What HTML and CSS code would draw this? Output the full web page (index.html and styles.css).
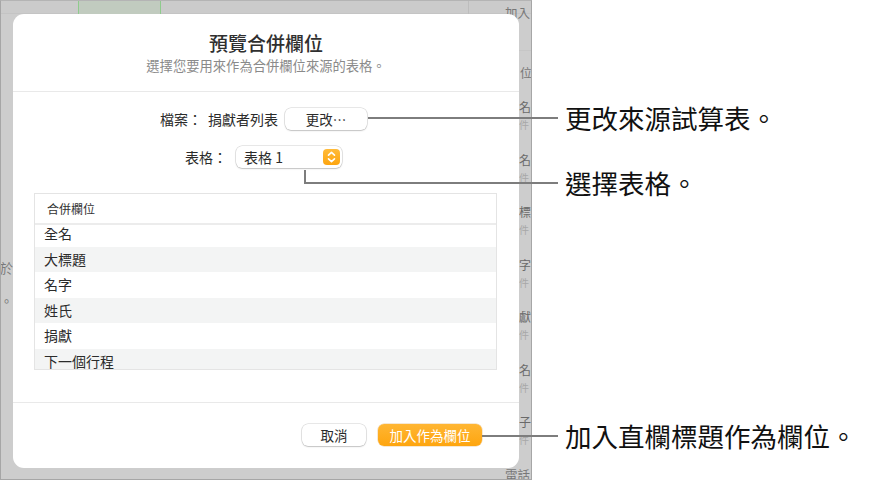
FILE: index.html
```html
<!DOCTYPE html>
<html lang="zh-Hant">
<head>
<meta charset="utf-8">
<link rel="stylesheet" href="styles.css">
</head>
<body>
<div class="page">
  <div class="screen">
    <div class="topband">
      <div class="selcell"></div>
      <div class="topdiv"></div>
    </div>
    <div class="leftcol">
      <span class="lc-a">於</span>
      <span class="lc-b">。</span>
    </div>
    <div class="rightcol">
      <div class="rc-top">加入</div>
      <div class="rc-head">位</div>
      <div class="rc-pair"><span class="big">名</span><span class="small">件</span></div>
      <div class="rc-pair"><span class="big">名</span><span class="small">件</span></div>
      <div class="rc-pair"><span class="big">標</span><span class="small">件</span></div>
      <div class="rc-pair"><span class="big">字</span><span class="small">件</span></div>
      <div class="rc-pair"><span class="big">獻</span><span class="small">件</span></div>
      <div class="rc-pair"><span class="big">名</span><span class="small">件</span></div>
      <div class="rc-pair"><span class="big">子</span><span class="small">件</span></div>
      <div class="rc-bottom">雷話</div>
    </div>

    <div class="dialog">
      <div class="dlg-head">
        <div class="dlg-title">預覽合併欄位</div>
        <div class="dlg-sub">選擇您要用來作為合併欄位來源的表格。</div>
      </div>
      <div class="dlg-body">
        <div class="form-row">
          <span class="lbl">檔案：</span>
          <span class="val">捐獻者列表</span>
          <button class="btn btn-change">更改⋯</button>
        </div>
        <div class="form-row row2">
          <span class="lbl">表格：</span>
          <div class="popup">
            <span>表格 1</span>
            <span class="stepper">
              <svg width="17" height="16" viewBox="0 0 17 16">
                <path d="M5.5 6.2 L8.5 3.4 L11.5 6.2" fill="none" stroke="#fff" stroke-width="1.6" stroke-linecap="round" stroke-linejoin="round"/>
                <path d="M5.5 9.8 L8.5 12.6 L11.5 9.8" fill="none" stroke="#fff" stroke-width="1.6" stroke-linecap="round" stroke-linejoin="round"/>
              </svg>
            </span>
          </div>
        </div>
        <div class="table">
          <div class="th">合併欄位</div>
          <div class="rows">
            <div class="tr first">全名</div>
            <div class="tr alt">大標題</div>
            <div class="tr">名字</div>
            <div class="tr alt">姓氏</div>
            <div class="tr">捐獻</div>
            <div class="tr alt">下一個行程</div>
          </div>
        </div>
      </div>
      <div class="dlg-foot">
        <button class="btn btn-cancel">取消</button>
        <button class="btn btn-primary">加入作為欄位</button>
      </div>
    </div>
  </div>

  <div class="callout c1"><span class="cline"></span><span class="ctext">更改來源試算表。</span></div>
  <div class="callout c2"><span class="cline elbow"></span><span class="ctext">選擇表格。</span></div>
  <div class="callout c3"><span class="cline"></span><span class="ctext">加入直欄標題作為欄位。</span></div>
</div>
</body>
</html>
```

FILE: styles.css
```css
* { box-sizing: border-box; }
html, body { margin: 0; padding: 0; background: #fff; }
body {
  font-family: "Noto Sans CJK TC", "Noto Sans", "Liberation Sans", sans-serif;
  width: 875px;
  height: 481px;
  overflow: hidden;
}
.page {
  position: relative;
  width: 875px;
  height: 481px;
}
.screen {
  position: relative;
  width: 532px;
  height: 480px;
  background: #cdcdcd;
  border-left: 1px solid #a6a6a6;
  border-right: 1px solid #a6a6a6;
  border-bottom: 1px solid #a6a6a6;
  border-top: 1px solid #b4b4b4;
  overflow: hidden;
}
.topband {
  height: 13px;
  display: flex;
  border-bottom: 1px solid #c4c4c4;
  background: #cbcbcb;
}
.selcell {
  margin-left: 77px;
  width: 83px;
  height: 13px;
  background: #c1cbbf;
  border-left: 1px solid #8fcb8d;
  border-right: 1px solid #8fcb8d;
}
.topdiv {
  margin-left: 307px;
  width: 1px;
  height: 13px;
  background: #bdbdbd;
}
.leftcol {
  position: absolute;
  left: -1px;
  top: 256px;
  width: 13px;
  display: flex;
  flex-direction: column;
  align-items: flex-end;
  color: #7a7a7a;
  font-size: 13px;
  line-height: 22px;
}
.leftcol span { white-space: nowrap; }
.lc-b { margin-top: 11px; }
.rightcol {
  position: absolute;
  left: 503px;
  top: -1px;
  width: 27px;
  display: flex;
  flex-direction: column;
  color: #6f6f6f;
  font-size: 12px;
}
.rightcol div { white-space: nowrap; }
.rc-top { height: 26px; line-height: 26px; font-size: 12.5px; color: #777; padding-left: 1px; }
.rc-head { margin-top: 24px; padding-top: 12px; height: 32px; line-height: 20px; font-size: 12px; color: #777; padding-left: 16px; border-top: 1px solid #c6c6c6; }
.rc-pair {
  height: 52.5px;
  display: flex;
  flex-direction: column;
  padding-left: 15px;
}
.rc-head + .rc-pair { margin-top: 15px; }
.rc-pair .big { height: 20px; line-height: 20px; font-size: 12px; color: #6a6a6a; }
.rc-pair .small { height: 16px; line-height: 16px; font-size: 10px; color: #a8a8a8; }
.rc-bottom { margin-top: 2px; height: 16px; line-height: 16px; font-size: 12.5px; color: #777; padding-left: 1px; }

/* dialog sheet over the app */
.dialog {
  position: absolute;
  left: 12px;
  top: 13px;
  width: 506px;
  height: 454px;
  background: #fff;
  border-radius: 11px;
  display: flex;
  flex-direction: column;
  color: #2b2b2b;
}
.dlg-head {
  padding-top: 17px;
  height: 78px;
  border-bottom: 1px solid #e9e9e9;
  text-align: center;
}
.dlg-title {
  font-size: 19px;
  line-height: 24px;
  font-weight: 500;
  color: #2f2f2f;
}
.dlg-sub {
  margin-top: 3px;
  font-size: 13.3px;
  line-height: 16px;
  color: #8a8a8a;
}
.dlg-body {
  flex: 1;
  padding-top: 16px;
  display: flex;
  flex-direction: column;
  border-bottom: 1px solid #e9e9e9;
}
.form-row {
  display: flex;
  align-items: center;
  justify-content: center;
  height: 22px;
  padding-right: 5px;
  font-size: 14px;
  color: #2b2b2b;
}
.form-row .lbl { margin-right: 6px; }
.form-row .val { margin-right: 7px; }
.row2 { margin-top: 16px; }
.row2 .lbl { margin-right: 9px; }
.btn {
  font-family: inherit;
  border: none;
  padding: 0;
  height: 22px;
  border-radius: 6px;
  font-size: 13.5px;
  cursor: default;
}
.btn-change {
  width: 82px;
  background: #fff;
  color: #2b2b2b;
  box-shadow: 0 0 0 0.5px rgba(0,0,0,0.18), 0 1px 1.5px rgba(0,0,0,0.16);
}
.popup {
  width: 106px;
  height: 22px;
  border-radius: 6px;
  background: #fff;
  box-shadow: 0 0 0 0.5px rgba(0,0,0,0.18), 0 1px 1.5px rgba(0,0,0,0.16);
  display: flex;
  align-items: center;
  justify-content: space-between;
  padding-left: 8px;
  padding-right: 2px;
  font-size: 14px;
}
.stepper {
  width: 17px;
  height: 16px;
  border-radius: 4px;
  background: linear-gradient(#ffbb3a, #fda510);
  display: flex;
}
.table {
  margin: 25px 22px 0 21px;
  height: 177px;
  border: 1px solid #e4e4e4;
  display: flex;
  flex-direction: column;
}
.th {
  height: 31px;
  border-bottom: 2px solid #ececec;
  padding-left: 12px;
  font-size: 12px;
  line-height: 30px;
  color: #333;
}
.rows {
  flex: 1;
  overflow: hidden;
}
.tr {
  height: 25.5px;
  line-height: 25.5px;
  padding-left: 9px;
  font-size: 14px;
  color: #2b2b2b;
}
.tr.first { margin-top: -4px; }
.tr.alt { background: #f3f4f4; }
.dlg-foot {
  height: 65px;
  display: flex;
  justify-content: flex-end;
  align-items: flex-start;
  padding-top: 21px;
  padding-right: 37px;
  gap: 12px;
}
.btn-cancel {
  width: 64px;
  background: #fff;
  color: #2b2b2b;
  box-shadow: 0 0 0 0.5px rgba(0,0,0,0.18), 0 1px 1.5px rgba(0,0,0,0.16);
}
.btn-primary {
  width: 104px;
  background: linear-gradient(#ffb633, #fea50f);
  color: #fff;
  box-shadow: 0 0 0 0.5px rgba(200,120,0,0.35);
}

/* annotation callouts */
.callout {
  position: absolute;
  display: flex;
  align-items: center;
  color: #111;
  font-size: 26.5px;
  line-height: 30px;
}
.cline {
  display: block;
  height: 2px;
  background: #7d7d7d;
  margin-right: 7px;
}
.c1 { left: 368px; top: 103px; }
.c1 .cline { width: 190px; }
.c2 { left: 304px; top: 168px; align-items: flex-end; }
.c2 .cline.elbow {
  width: 254px;
  height: 14px;
  background: none;
  border-left: 2px solid #7d7d7d;
  border-bottom: 2px solid #7d7d7d;
}
.c2 .ctext { margin-bottom: -14px; }
.c3 { left: 482px; top: 421px; }
.c3 .cline { width: 76px; }
```
